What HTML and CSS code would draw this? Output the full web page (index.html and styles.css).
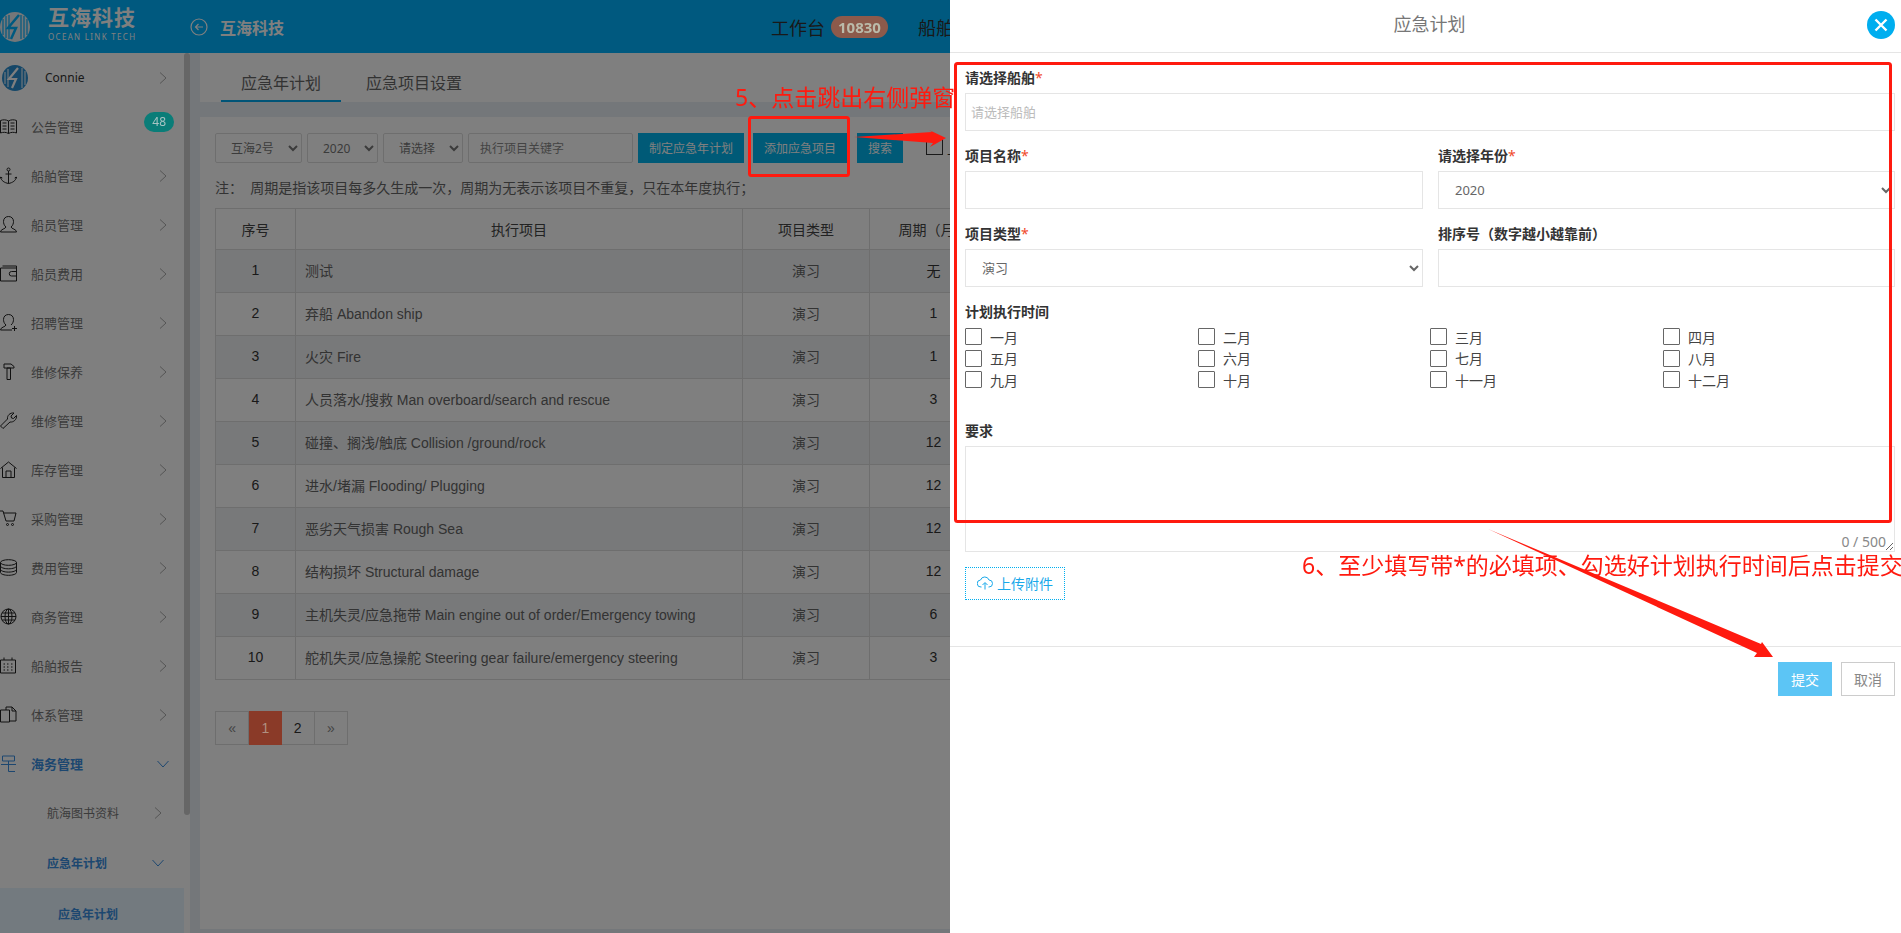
FILE: index.html

```html
<!DOCTYPE html>
<html lang="zh-CN">
<head>
  <meta charset="UTF-8">
  <title>应急计划</title>
  <link rel="stylesheet" href="styles.css">
</head>
<body>
  <header class="topbar">
    <div class="brand">
      <svg class="brand-logo" viewBox="0 0 30 30">
        <circle cx="15" cy="15" r="15" fill="#e8eef2"/>
        <path d="M3 7v16M6 4v22M9 3v24M21 3v24M24 4v22M27 7v16" stroke="#00b2ff" stroke-width="1.2"/>
        <path d="M19 3 8 16h8l-5 11" fill="none" stroke="#00b2ff" stroke-width="2.5"/>
      </svg>
      <div class="brand-text">
        <div class="brand-name">互海科技</div>
        <div class="brand-sub">OCEAN LINK TECH</div>
      </div>
    </div>
    <svg class="back-icon" viewBox="0 0 18 18">
      <circle cx="9" cy="9" r="8" fill="none" stroke="#fff" stroke-width="1.2"/>
      <path d="M13 9H5.5M8.5 6 5.5 9l3 3" fill="none" stroke="#fff" stroke-width="1.2"/>
    </svg>
    <span class="company">互海科技</span>
    <nav class="topnav">
      <span>工作台</span>
      <span class="count-badge raised">10830</span>
      <span class="topnav-next">船舶</span>
    </nav>
  </header>

  <div class="layout">
    <aside class="sidebar">
      <div class="nav-list">
        <div class="nav-item user-item">
          <svg class="user-logo" viewBox="0 0 26 26">
            <circle cx="13" cy="13" r="13" fill="#2b8fd0"/>
            <path d="M3 7v12M6 4v18M20 3v20M23 6v14" stroke="#fff" stroke-width="1"/>
            <path d="M16 3 7 14h7l-4 9" fill="none" stroke="#fff" stroke-width="2.2"/>
          </svg>
          <span class="user-name">Connie</span>
          <svg class="chev" viewBox="0 0 8 12"><path d="M1 .5 7 6l-6 5.500"/></svg>
        </div>
        <div class="nav-item">
          <svg class="nav-icon" viewBox="0 0 17 17"><path d="M8.500 3C6 1.500 3 1.500.500 2.500V15c2.500-1 5.500-1 8 .5 2.500-1.500 5.500-1.500 8-.5V2.500C14 1.500 11 1.500 8.500 3zM8.500 3v12.500M2.500 5h4M2.500 8h4M2.500 11h4M10.500 5h4M10.500 8h4M10.500 11h4"/></svg>
          <span>公告管理</span>
          <span class="notice-badge raised">48</span>
        </div>
        <div class="nav-item">
          <svg class="nav-icon" viewBox="0 0 17 17"><circle cx="8.500" cy="2.500" r="1.500"/><path d="M8.500 4v12.500M5.500 7h6M.8 10c0 3.500 3.700 5.800 7.700 6.500 4-.7 7.700-3 7.700-6.500M0 11.500.8 10l1.500 1M17 11.500 16.200 10l-1.500 1"/></svg>
          <span>船舶管理</span>
          <svg class="chev" viewBox="0 0 8 12"><path d="M1 .5 7 6l-6 5.500"/></svg>
        </div>
        <div class="nav-item">
          <svg class="nav-icon" viewBox="0 0 17 17"><path d="M.5 16c0-3 5-3 5.500-5C4 9.500 3.500 7 3.500 5.500c0-3 2-5 5-5s5 2 5 5c0 1.500-.5 4-2.500 5.500.5 2 5.500 2 5.500 5z"/></svg>
          <span>船员管理</span>
          <svg class="chev" viewBox="0 0 8 12"><path d="M1 .5 7 6l-6 5.500"/></svg>
        </div>
        <div class="nav-item">
          <svg class="nav-icon" viewBox="0 0 17 17"><path d="M.5 3h16v13H.5zM2.500 1h14v2M16.500 6.500h-5a2 2 0 0 0 0 4.500h5"/></svg>
          <span>船员费用</span>
          <svg class="chev" viewBox="0 0 8 12"><path d="M1 .5 7 6l-6 5.500"/></svg>
        </div>
        <div class="nav-item">
          <svg class="nav-icon" viewBox="0 0 17 17"><path d="M.5 16c0-3 5-3 5.500-5C4 9.500 3.500 7 3.500 5.500c0-3 2-5 5-5s5 2 5 5c0 1.500-.5 4-2.500 5.500M.5 16H12M12 14.500h5M14.500 12v5"/></svg>
          <span>招聘管理</span>
          <svg class="chev" viewBox="0 0 8 12"><path d="M1 .5 7 6l-6 5.500"/></svg>
        </div>
        <div class="nav-item">
          <svg class="nav-icon" viewBox="0 0 17 17"><path d="M4 1h7l3 2.500V5H4zM7 5h3.500v11.500H7z"/></svg>
          <span>维修保养</span>
          <svg class="chev" viewBox="0 0 8 12"><path d="M1 .5 7 6l-6 5.500"/></svg>
        </div>
        <div class="nav-item">
          <svg class="nav-icon" viewBox="0 0 17 17"><path d="M.5 14 7.500 7C7 3.500 10 .5 14 1l-3 3 .5 2 2 .5 3-3c.5 4-3 7-6.500 6.500L3 16.500z"/></svg>
          <span>维修管理</span>
          <svg class="chev" viewBox="0 0 8 12"><path d="M1 .5 7 6l-6 5.500"/></svg>
        </div>
        <div class="nav-item">
          <svg class="nav-icon" viewBox="0 0 17 17"><path d="M.5 7.500 8.500 1l8 6.500M2.500 6.500v10h12v-10M6 16.500V10h5v6.500"/></svg>
          <span>库存管理</span>
          <svg class="chev" viewBox="0 0 8 12"><path d="M1 .5 7 6l-6 5.500"/></svg>
        </div>
        <div class="nav-item">
          <svg class="nav-icon" viewBox="0 0 17 17"><path d="M0 1h3l3 10h8l2-8H3.600"/><circle cx="7.500" cy="14.500" r="1"/><circle cx="12.500" cy="14.500" r="1"/></svg>
          <span>采购管理</span>
          <svg class="chev" viewBox="0 0 8 12"><path d="M1 .5 7 6l-6 5.500"/></svg>
        </div>
        <div class="nav-item">
          <svg class="nav-icon" viewBox="0 0 17 17"><ellipse cx="8.500" cy="3.500" rx="8" ry="2.800"/><path d="M.5 3.500v10c0 1.500 3.500 2.800 8 2.800s8-1.300 8-2.800v-10M.5 7c0 1.500 3.500 2.800 8 2.800s8-1.300 8-2.800M.5 10.300c0 1.500 3.500 2.800 8 2.800s8-1.300 8-2.800"/></svg>
          <span>费用管理</span>
          <svg class="chev" viewBox="0 0 8 12"><path d="M1 .5 7 6l-6 5.500"/></svg>
        </div>
        <div class="nav-item">
          <svg class="nav-icon" viewBox="0 0 17 17"><circle cx="8.500" cy="8.500" r="7.500"/><ellipse cx="8.500" cy="8.500" rx="3.500" ry="7.500"/><path d="M8.500 1v15M1 8.500h15M2 5h13M2 12h13"/></svg>
          <span>商务管理</span>
          <svg class="chev" viewBox="0 0 8 12"><path d="M1 .5 7 6l-6 5.500"/></svg>
        </div>
        <div class="nav-item">
          <svg class="nav-icon" viewBox="0 0 17 17"><path d="M.5 3h15v13H.5zM4 .5V3M12 .5V3M3.500 7h1.500M7 7h1.500M11 7h1.500M3.500 10h1.500M7 10h1.500M11 10h1.500M3.500 13h1.500M7 13h1.500M11 13h1.500"/></svg>
          <span>船舶报告</span>
          <svg class="chev" viewBox="0 0 8 12"><path d="M1 .5 7 6l-6 5.500"/></svg>
        </div>
        <div class="nav-item">
          <svg class="nav-icon" viewBox="0 0 17 17"><path d="M.5 4h9v12H.5zM6 4V1h6l4 4v10H9.500M12 1v4h4"/></svg>
          <span>体系管理</span>
          <svg class="chev" viewBox="0 0 8 12"><path d="M1 .5 7 6l-6 5.500"/></svg>
        </div>
        <div class="nav-item is-open">
          <svg class="nav-icon" viewBox="0 0 17 17"><path d="M2.500 1h12v5h-12zM1 9.500h15M8.500 6v10.500M8.500 16.500H15"/></svg>
          <span>海务管理</span>
          <svg class="chev-down" viewBox="0 0 12 8"><path d="M.5 1 6 7l5.500-6"/></svg>
        </div>
        <div class="sub-item">
          <span>航海图书资料</span>
          <svg class="chev" viewBox="0 0 8 12"><path d="M1 .5 7 6l-6 5.500"/></svg>
        </div>
        <div class="sub-item sub-open">
          <span>应急年计划</span>
          <svg class="chev-down" viewBox="0 0 12 8"><path d="M.5 1 6 7l5.500-6"/></svg>
        </div>
        <div class="sub-current">应急年计划</div>
      </div>
      <div class="side-scroll"></div>
    </aside>

    <main class="content">
      <div class="tabs">
        <span class="tab tab-active">应急年计划</span>
        <span class="tab">应急项目设置</span>
      </div>
      <section class="card">
        <div class="toolbar">
          <select class="filter filter-ship"><option>互海2号</option></select>
          <select class="filter filter-year"><option>2020</option></select>
          <select class="filter filter-type"><option>请选择</option></select>
          <input class="keyword" type="text" placeholder="执行项目关键字">
          <button class="btn btn-plan">制定应急年计划</button>
          <button class="btn btn-add">添加应急项目</button>
          <button class="btn btn-search">搜索</button>
          <span class="tool-check"></span>
          <span class="tool-check-label">上</span>
        </div>
        <p class="note">注：&nbsp; 周期是指该项目每多久生成一次，周期为无表示该项目不重复，只在本年度执行；</p>
        <table class="plan-table">
          <colgroup>
            <col class="col-no"><col class="col-name"><col class="col-type"><col class="col-cycle"><col>
          </colgroup>
          <thead>
            <tr><th>序号</th><th>执行项目</th><th>项目类型</th><th>周期（月）</th><th></th></tr>
          </thead>
          <tbody>
            <tr><td>1</td><td class="left">测试</td><td>演习</td><td>无</td><td></td></tr>
            <tr><td>2</td><td class="left">弃船 Abandon ship</td><td>演习</td><td>1</td><td></td></tr>
            <tr><td>3</td><td class="left">火灾 Fire</td><td>演习</td><td>1</td><td></td></tr>
            <tr><td>4</td><td class="left">人员落水/搜救 Man overboard/search and rescue</td><td>演习</td><td>3</td><td></td></tr>
            <tr><td>5</td><td class="left">碰撞、搁浅/触底 Collision /ground/rock</td><td>演习</td><td>12</td><td></td></tr>
            <tr><td>6</td><td class="left">进水/堵漏 Flooding/ Plugging</td><td>演习</td><td>12</td><td></td></tr>
            <tr><td>7</td><td class="left">恶劣天气损害 Rough Sea</td><td>演习</td><td>12</td><td></td></tr>
            <tr><td>8</td><td class="left">结构损坏 Structural damage</td><td>演习</td><td>12</td><td></td></tr>
            <tr><td>9</td><td class="left">主机失灵/应急拖带 Main engine out of order/Emergency towing</td><td>演习</td><td>6</td><td></td></tr>
            <tr><td>10</td><td class="left">舵机失灵/应急操舵 Steering gear failure/emergency steering</td><td>演习</td><td>3</td><td></td></tr>
          </tbody>
        </table>
        <div class="pager">
          <span class="page page-muted">«</span>
          <span class="page page-on raised">1</span>
          <span class="page">2</span>
          <span class="page page-muted">»</span>
        </div>
      </section>
    </main>
  </div>

  <div class="mask"></div>

  <aside class="panel">
    <div class="panel-head">
      <span class="panel-title">应急计划</span>
      <svg class="panel-close" viewBox="0 0 28 28">
        <circle cx="14" cy="14" r="14" fill="#00aeef"/>
        <path d="M8.500 8.500l11 11M19.500 8.500l-11 11" stroke="#fff" stroke-width="2.400"/>
      </svg>
    </div>
    <form class="panel-body">
      <div class="field">
        <label class="field-label">请选择船舶<em>*</em></label>
        <input class="control control-ship" type="text" placeholder="请选择船舶">
      </div>
      <div class="field-row">
        <div class="field">
          <label class="field-label">项目名称<em>*</em></label>
          <input class="control" type="text">
        </div>
        <div class="field">
          <label class="field-label">请选择年份<em>*</em></label>
          <select class="control control-select"><option>2020</option></select>
        </div>
      </div>
      <div class="field-row">
        <div class="field">
          <label class="field-label">项目类型<em>*</em></label>
          <select class="control control-select"><option>演习</option></select>
        </div>
        <div class="field">
          <label class="field-label">排序号（数字越小越靠前）</label>
          <input class="control" type="text">
        </div>
      </div>
      <div class="field-label">计划执行时间</div>
      <div class="months">
        <label class="month"><input type="checkbox">一月</label>
        <label class="month"><input type="checkbox">二月</label>
        <label class="month"><input type="checkbox">三月</label>
        <label class="month"><input type="checkbox">四月</label>
        <label class="month"><input type="checkbox">五月</label>
        <label class="month"><input type="checkbox">六月</label>
        <label class="month"><input type="checkbox">七月</label>
        <label class="month"><input type="checkbox">八月</label>
        <label class="month"><input type="checkbox">九月</label>
        <label class="month"><input type="checkbox">十月</label>
        <label class="month"><input type="checkbox">十一月</label>
        <label class="month"><input type="checkbox">十二月</label>
      </div>
      <label class="field-label">要求</label>
      <div class="text-wrap">
        <textarea class="text-area"></textarea>
        <span class="counter">0 / 500</span>
      </div>
      <button type="button" class="upload">
        <svg class="upload-icon" viewBox="0 0 16 14"><path d="M4.500 11H4a3.500 3.500 0 0 1-.5-7A4.500 4.500 0 0 1 12 4a3.500 3.500 0 0 1 0 7h-.5M8 13.500V7M5.500 9 8 6.500 10.500 9"/></svg>
        上传附件
      </button>
    </form>
    <div class="panel-foot">
      <button class="foot-btn foot-submit">提交</button>
      <button class="foot-btn foot-cancel">取消</button>
    </div>
  </aside>

  <!-- red notes drawn on top of the screenshot -->
  <svg class="marks" viewBox="0 0 1901 933">
    <rect x="749.500" y="117.500" width="99" height="58" rx="2" class="mark-box"/>
    <rect x="955.500" y="63.500" width="935" height="458" rx="2" class="mark-box"/>
    <polygon points="854,137 932,132 929,130 946,138 930,147 933,143" class="mark-fill"/>
    <polygon points="1488,529 1761,644 1762,642 1773,657 1754,657 1757,653" class="mark-fill"/>
  </svg>
  <div class="note-text note-five">5、点击跳出右侧弹窗</div>
  <div class="note-text note-six">6、至少填写带*的必填项、勾选好计划执行时间后点击提交</div>
</body>
</html>
```

FILE: styles.css

```css
* {
  box-sizing: border-box;
}

html, body {
  height: 100%;
}

body {
  display: flex;
  flex-direction: column;
  margin: 0;
  overflow: hidden;
  background-color: #fff;
  color: #555;
  font-family: "Noto Sans", "Noto Sans CJK SC", sans-serif;
  font-size: 14px;
}

button, input, select, textarea {
  font-family: inherit;
}

.raised {
  position: relative;
  z-index: 6;
}

/* top bar */
.topbar {
  display: flex;
  align-items: center;
  flex: none;
  height: 53px;
  background-color: #00b2ff;
}

.brand {
  display: flex;
  align-items: center;
  width: 190px;
}

.brand-logo {
  width: 30px;
  height: 30px;
  margin-right: 18px;
}

.brand-text {
  margin-top: -6px;
}

.brand-name {
  color: #fff;
  font-size: 21px;
  font-weight: 700;
  line-height: 24px;
  letter-spacing: 1px;
}

.brand-sub {
  margin-top: 3px;
  color: #fff;
  font-size: 8px;
  line-height: 10px;
  letter-spacing: 1.300px;
  white-space: nowrap;
}

.back-icon {
  width: 18px;
  height: 18px;
  margin-right: 12px;
}

.company {
  color: #fff;
  font-size: 16px;
  font-weight: 700;
}

.topnav {
  display: flex;
  align-items: center;
  margin-left: 487px;
  color: #333;
  font-size: 18px;
}

.count-badge {
  height: 22px;
  margin-left: 6px;
  padding: 0 7px;
  border-radius: 11px;
  background-color: #8c5a4b;
  color: #bba;
  font-size: 15px;
  font-weight: 700;
  line-height: 22px;
}

.topnav-next {
  margin-left: 30px;
}

/* side menu */
.layout {
  display: flex;
  flex: 1;
  min-height: 0;
}

.sidebar {
  display: flex;
  flex: none;
  width: 190px;
  overflow: hidden;
  background-color: #fff;
}

.nav-list {
  flex: none;
  width: 184px;
}

.nav-item {
  display: flex;
  align-items: center;
  height: 49px;
  padding-right: 17px;
  color: #777;
  font-size: 13px;
}

.nav-icon {
  flex: none;
  width: 17px;
  height: 17px;
  margin-right: 14px;
  fill: none;
  stroke: #222;
  stroke-width: 1;
}

.user-logo {
  flex: none;
  width: 26px;
  height: 26px;
  margin: 0 17px 0 2px;
}

.user-name {
  color: #333;
  font-size: 12px;
}

.chev {
  flex: none;
  width: 8px;
  height: 12px;
  margin-left: auto;
  fill: none;
  stroke: #aaa;
  stroke-width: 1;
}

.chev-down {
  flex: none;
  width: 12px;
  height: 8px;
  margin-left: auto;
  margin-right: -2px;
  fill: none;
  stroke: #3b8fe0;
  stroke-width: 1;
}

.notice-badge {
  height: 20px;
  margin-left: auto;
  margin-right: -7px;
  margin-top: -9px;
  padding: 0 8px;
  border-radius: 10px;
  background-color: #0a7d78;
  color: #a8c4c4;
  font-size: 12px;
  line-height: 20px;
}

.is-open {
  color: #3b8fe0;
  font-weight: 700;
}

.is-open .nav-icon {
  stroke: #3b8fe0;
}

.sub-item {
  display: flex;
  align-items: center;
  height: 50px;
  padding: 0 22px 0 47px;
  color: #777;
  font-size: 12px;
}

.sub-open {
  color: #3b8fe0;
  font-weight: 700;
}

.sub-current {
  height: 52px;
  padding-left: 58px;
  background-color: #e6f4ff;
  color: #3b8fe0;
  font-size: 12px;
  font-weight: 700;
  line-height: 54px;
}

.side-scroll {
  flex: none;
  width: 6px;
  height: 762px;
  border-radius: 3px;
  background-color: #ccc;
}

/* main area */
.content {
  flex: 1;
  min-width: 0;
  padding: 0 0 4px 10px;
  overflow: hidden;
  background-color: #e9eff4;
}

.tabs {
  display: flex;
  height: 49px;
  margin-bottom: 15px;
  padding-left: 21px;
  background-color: #fff;
}

.tab {
  width: 120px;
  margin-right: 13px;
  color: #666;
  font-size: 16px;
  line-height: 60px;
  text-align: center;
}

.tab-active {
  height: 49px;
  border-bottom: 2px solid #00a8ee;
}

.card {
  height: 812px;
  padding: 16px 15px;
  background-color: #fff;
}

.toolbar {
  display: flex;
  align-items: center;
  height: 30px;
  white-space: nowrap;
}

.filter, .keyword {
  flex: none;
  height: 30px;
  margin-right: 5px;
  padding: 0 0 0 11px;
  border: 1px solid #ddd;
  border-radius: 2px;
  background-color: #fff;
  color: #777;
  font-size: 12px;
}

.filter-ship {
  width: 87px;
}

.filter-year {
  width: 71px;
}

.filter-type {
  width: 80px;
}

.keyword {
  width: 165px;
}

.keyword::placeholder {
  color: #888;
}

.btn {
  flex: none;
  height: 30px;
  padding: 0;
  border: 0;
  background-color: #00b4ee;
  color: #fff;
  font-size: 12px;
}

.btn-plan {
  width: 106px;
  margin-right: 9px;
}

.btn-add {
  width: 94px;
  margin-right: 10px;
}

.btn-search {
  width: 46px;
  margin-right: 23px;
}

.tool-check {
  flex: none;
  width: 17px;
  height: 17px;
  margin-top: -3px;
  border: 1px solid #333;
}

.tool-check-label {
  margin-left: 4px;
  color: #333;
}

.note {
  height: 20px;
  margin: 15px 0 10px;
  color: #666;
  font-size: 14px;
  line-height: 20px;
}

.plan-table {
  width: 1671px;
  border-collapse: collapse;
  table-layout: fixed;
  font-family: "Liberation Sans", "Noto Sans CJK SC", sans-serif;
}

.col-no {
  width: 80px;
}

.col-name {
  width: 447px;
}

.col-type {
  width: 127px;
}

.col-cycle {
  width: 128px;
}

.plan-table th, .plan-table td {
  height: 43px;
  padding: 0 10px;
  border: 1px solid #ddd;
  font-size: 14px;
  font-weight: 400;
  text-align: center;
  white-space: nowrap;
}

.plan-table th {
  height: 41px;
  color: #444;
}

.plan-table td {
  padding-bottom: 2px;
  color: #666;
}

.plan-table td:first-child, .plan-table td:nth-child(4) {
  color: #333;
}

.plan-table td.left {
  padding-left: 9px;
  text-align: left;
}

.plan-table tbody tr:nth-child(odd) {
  background-color: #f1f3f5;
}

.pager {
  display: flex;
  width: 133px;
  height: 34px;
  margin-top: 31px;
  border: 1px solid #ddd;
  font-family: "Liberation Sans", sans-serif;
}

.page {
  flex: 1;
  border-right: 1px solid #ddd;
  color: #333;
  font-size: 14px;
  line-height: 32px;
  text-align: center;
}

.page:last-child {
  border-right: 0;
}

.page-muted {
  color: #888;
}

.page-on {
  margin: -1px 0;
  border-right: 0;
  background-color: #8a3a28;
  color: #b09080;
  line-height: 34px;
}

/* dim layer under the side panel */
.mask {
  position: fixed;
  top: 0;
  right: 0;
  bottom: 0;
  left: 0;
  z-index: 5;
  background-color: rgba(0, 0, 0, 0.5);
}

/* side panel */
.panel {
  position: fixed;
  top: 0;
  right: 0;
  bottom: 0;
  z-index: 10;
  display: flex;
  flex-direction: column;
  width: 951px;
  background-color: #fff;
}

.panel-head {
  display: flex;
  align-items: center;
  justify-content: center;
  flex: none;
  position: relative;
  height: 53px;
  padding-left: 8px;
  border-bottom: 1px solid #e5e5e5;
}

.panel-title {
  margin-top: -7px;
  color: #777;
  font-size: 18px;
}

.panel-close {
  position: absolute;
  top: 11px;
  right: 6px;
  width: 28px;
  height: 28px;
}

.panel-body {
  flex: none;
  height: 593px;
  padding: 14px 6px 0 15px;
}

.field {
  margin-bottom: 14px;
}

.field-row {
  display: grid;
  grid-template-columns: 458px 457px;
  column-gap: 15px;
}

.field-label {
  display: block;
  height: 22px;
  margin-bottom: 4px;
  color: #333;
  font-size: 14px;
  font-weight: 700;
  line-height: 22px;
}

.field-label em {
  color: #f04a2a;
  font-style: normal;
  font-weight: 400;
}

.control {
  display: block;
  width: 100%;
  height: 38px;
  padding: 0 5px;
  border: 1px solid #e5e5e5;
  background-color: #fff;
  color: #666;
  font-size: 13px;
  outline: none;
}

.control::placeholder {
  color: #bbb;
}

.control-select {
  padding-left: 12px;
}

.months {
  display: grid;
  grid-template-columns: 233px 232px 233px 1fr;
  margin: -1px 0 29px;
}

.month {
  display: flex;
  align-items: center;
  height: 21.500px;
  color: #444;
  font-size: 14px;
}

.month input {
  flex: none;
  width: 17px;
  height: 17px;
  margin: 0 8px 0 0;
  appearance: none;
  border: 1px solid #666;
  border-radius: 1px;
  background-color: #fff;
}

.text-wrap {
  position: relative;
  height: 106px;
}

.text-area {
  display: block;
  width: 100%;
  height: 106px;
  border: 1px solid #e5e5e5;
  outline: none;
}

.counter {
  position: absolute;
  right: 9px;
  bottom: 1px;
  color: #888;
  font-size: 14px;
}

.upload {
  display: flex;
  align-items: center;
  justify-content: center;
  width: 100px;
  height: 33px;
  margin-top: 15px;
  padding: 0;
  border: 1px dotted #00aeef;
  background-color: #fff;
  color: #1aa9ea;
  font-size: 14px;
}

.upload-icon {
  width: 16px;
  height: 14px;
  margin-right: 4px;
  fill: none;
  stroke: #1aa9ea;
  stroke-width: 1;
}

.panel-foot {
  display: flex;
  justify-content: flex-end;
  gap: 9px;
  flex: 1;
  padding: 15px 6px 0 0;
  border-top: 1px solid #e5e5e5;
}

.foot-btn {
  width: 54px;
  height: 34px;
  padding: 0;
  font-size: 14px;
}

.foot-submit {
  border: 0;
  background-color: #5cc5f5;
  color: #fff;
}

.foot-cancel {
  border: 1px solid #ccc;
  background-color: #fff;
  color: #888;
}

/* red annotations */
.marks {
  position: fixed;
  top: 0;
  left: 0;
  z-index: 20;
  width: 1901px;
  height: 933px;
  pointer-events: none;
}

.mark-box {
  fill: none;
  stroke: #ff1a0f;
  stroke-width: 3;
}

.mark-fill {
  fill: #ff1a0f;
}

.note-text {
  position: fixed;
  z-index: 21;
  color: #ff1a0f;
  font-size: 23px;
  line-height: 30px;
  white-space: nowrap;
}

.note-five {
  top: 82px;
  left: 735px;
}

.note-six {
  top: 550px;
  left: 1302px;
}
```
